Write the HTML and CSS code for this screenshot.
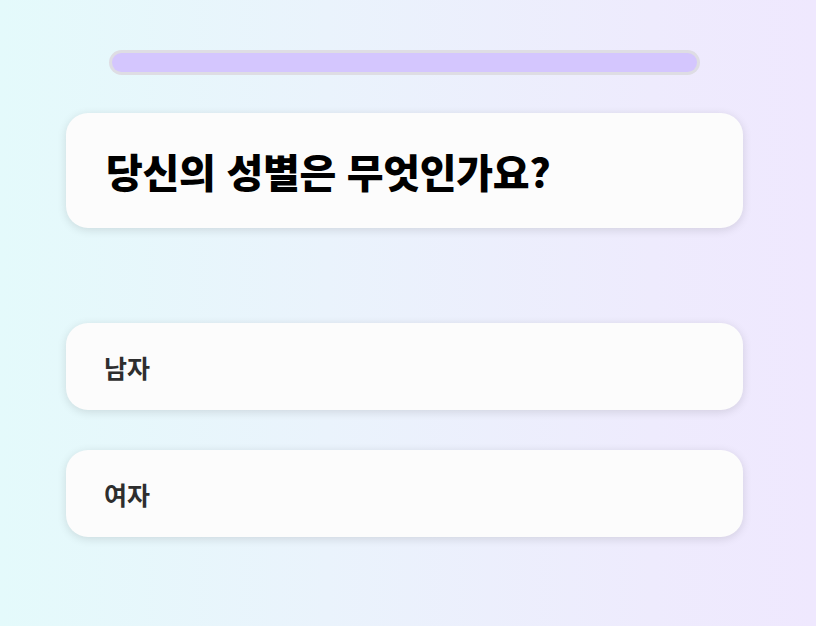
FILE: index.html
```html
<!DOCTYPE html>
<html lang="ko">
<head>
    <meta charset="UTF-8">
    <meta name="viewport" content="width=device-width, initial-scale=1.0">
    <title>성별 질문</title>
    <link rel="stylesheet" href="styles.css">
</head>
<body>
    <div class="survey">
        <div class="progress">
            <div class="progress-fill" style="width: 100%"></div>
        </div>

        <div class="question-card">
            <h1 class="question">당신의 성별은 무엇인가요?</h1>
        </div>

        <div class="options">
            <button class="option" type="button">남자</button>
            <button class="option" type="button">여자</button>
        </div>
    </div>
</body>
</html>
```

FILE: styles.css
```css
html, body {
    height: 100%;
}
body {
    margin: 0;
    font-family: "Noto Sans CJK KR", "Noto Sans", sans-serif;
    background: linear-gradient(90deg, #e4fafb 0%, #eaf3fc 40%, #eeebfd 80%, #efe8fe 100%);
}
.survey {
    width: 677px;
    margin-left: 66px;
    padding-top: 50px;
}
.progress {
    width: 591px;
    height: 25px;
    margin: 0 auto;
    padding: 3px;
    box-sizing: border-box;
    background: #dedde4;
    border-radius: 13px;
}
.progress-fill {
    height: 100%;
    background: #d4c6fe;
    border-radius: 10px;
}
.question-card {
    margin-top: 38px;
    height: 115px;
    box-sizing: border-box;
    padding: 0 40px;
    display: flex;
    align-items: center;
    background: #fcfcfc;
    border-radius: 22px;
    box-shadow: 0 2px 10px rgba(0, 0, 0, 0.12);
}
.question {
    margin: 0;
    font-size: 40px;
    font-weight: 800;
    color: #000;
    letter-spacing: -0.3px;
}
.options {
    margin-top: 95px;
    display: flex;
    flex-direction: column;
    gap: 40px;
}
.option {
    height: 87px;
    padding: 0 38px;
    border: 0;
    text-align: left;
    font-family: inherit;
    font-size: 25px;
    font-weight: 700;
    color: #2e2e2e;
    background: #fcfcfc;
    border-radius: 22px;
    box-shadow: 0 2px 10px rgba(0, 0, 0, 0.12);
    cursor: pointer;
}
```
